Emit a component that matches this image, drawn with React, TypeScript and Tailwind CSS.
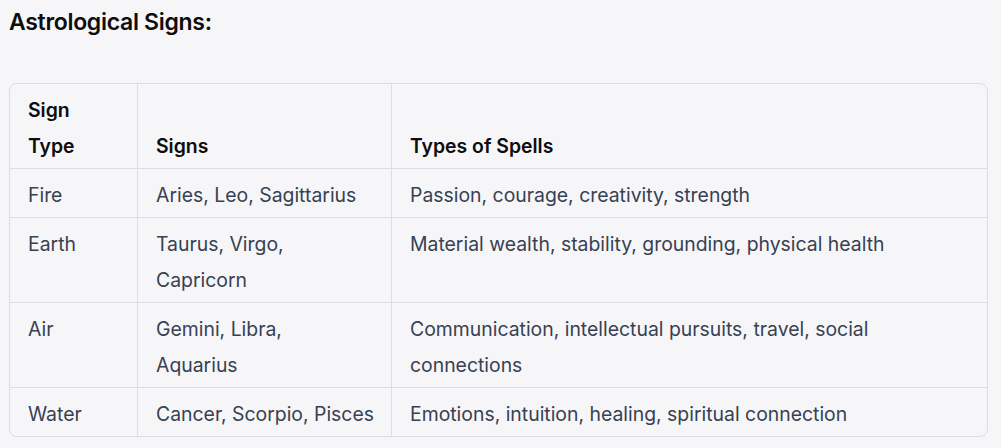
const rows = [
  { type: ["Fire"], signs: ["Aries, Leo, Sagittarius"], spells: ["Passion, courage, creativity, strength"] },
  { type: ["Earth"], signs: ["Taurus, Virgo,", "Capricorn"], spells: ["Material wealth, stability, grounding, physical health"] },
  { type: ["Air"], signs: ["Gemini, Libra,", "Aquarius"], spells: ["Communication, intellectual pursuits, travel, social", "connections"] },
  { type: ["Water"], signs: ["Cancer, Scorpio, Pisces"], spells: ["Emotions, intuition, healing, spiritual connection"] },
];

function Lines({ lines }: { lines: string[] }) {
  return (
    <>
      {lines.map((l, i) => (
        <span key={i} className="block whitespace-nowrap">
          {l}
        </span>
      ))}
    </>
  );
}

export default function App() {
  return (
    <main className="min-h-[448px] bg-[#f6f6f9] pl-[9px] pr-[13px] pt-[7px] font-['Inter',sans-serif]">
      <h3 className="text-[23px] leading-[30px] font-semibold text-[#0d0d0d] tracking-[-0.3px]">Astrological Signs:</h3>
      <div className="mt-[46px] rounded-lg border border-[#dcdce3] overflow-hidden">
        <table className="w-full table-fixed border-separate border-spacing-0 text-[19.4px] leading-[36px] text-[#374151]">
          <colgroup>
            <col className="w-[128px]" />
            <col className="w-[254px]" />
            <col />
          </colgroup>
          <thead>
            <tr className="text-left font-semibold text-[#0d0d0d]">
              <th className="align-bottom border-r border-b border-[#dcdce3] pl-[18px] pr-[4px] pt-[8px] pb-[4px] font-semibold">
                <Lines lines={["Sign", "Type"]} />
              </th>
              <th className="align-bottom border-r border-b border-[#dcdce3] pl-[18px] pr-[4px] pt-[8px] pb-[4px] font-semibold">Signs</th>
              <th className="align-bottom border-b border-[#dcdce3] pl-[18px] pr-[4px] pt-[8px] pb-[4px] font-semibold">Types of Spells</th>
            </tr>
          </thead>
          <tbody>
            {rows.map((r, i) => {
              const last = i === rows.length - 1;
              return (
                <tr key={r.type[0]}>
                  <td className={`align-top border-r border-[#dcdce3] pl-[18px] pr-[4px] pt-[8px] pb-[4px] ${last ? "" : "border-b"}`}>
                    <Lines lines={r.type} />
                  </td>
                  <td className={`align-top border-r border-[#dcdce3] pl-[18px] pr-[4px] pt-[8px] pb-[4px] ${last ? "" : "border-b"}`}>
                    <Lines lines={r.signs} />
                  </td>
                  <td className={`align-top border-[#dcdce3] pl-[18px] pr-[4px] pt-[8px] pb-[4px] ${last ? "" : "border-b"}`}>
                    <Lines lines={r.spells} />
                  </td>
                </tr>
              );
            })}
          </tbody>
        </table>
      </div>
    </main>
  );
}
